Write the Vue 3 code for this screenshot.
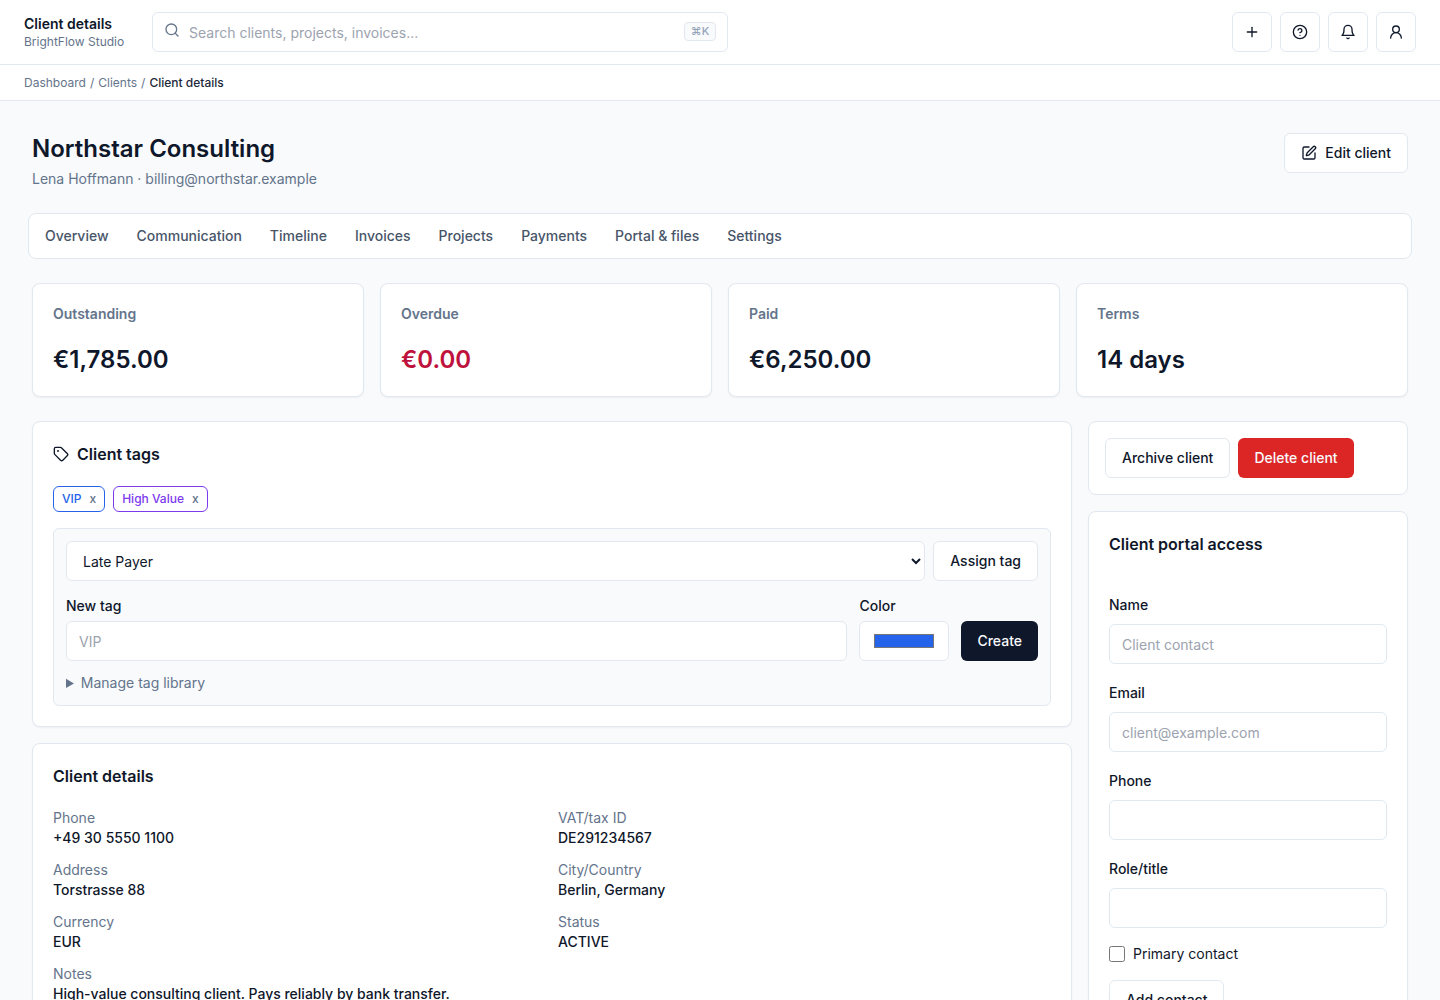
<script setup>
import { ref } from 'vue'

const tabs = ['Overview', 'Communication', 'Timeline', 'Invoices', 'Projects', 'Payments', 'Portal & files', 'Settings']

const stats = [
  { label: 'Outstanding', value: '€1,785.00' },
  { label: 'Overdue', value: '€0.00', danger: true },
  { label: 'Paid', value: '€6,250.00' },
  { label: 'Terms', value: '14 days' }
]

const tags = ref([
  { name: 'VIP', tone: 'blue' },
  { name: 'High Value', tone: 'violet' }
])

const details = [
  { label: 'Phone', value: '+49 30 5550 1100' },
  { label: 'VAT/tax ID', value: 'DE291234567' },
  { label: 'Address', value: 'Torstrasse 88' },
  { label: 'City/Country', value: 'Berlin, Germany' },
  { label: 'Currency', value: 'EUR' },
  { label: 'Status', value: 'ACTIVE' },
  { label: 'Notes', value: 'High-value consulting client. Pays reliably by bank transfer.', wide: true }
]

const contactFields = [
  { id: 'name', label: 'Name', placeholder: 'Client contact' },
  { id: 'email', label: 'Email', placeholder: 'client@example.com' },
  { id: 'phone', label: 'Phone', placeholder: '' },
  { id: 'role', label: 'Role/title', placeholder: '' }
]

const selectedTag = ref('Late Payer')
const newTag = ref('')
const tagColor = ref('#2563eb')

const removeTag = (name) => {
  tags.value = tags.value.filter((t) => t.name !== name)
}
</script>

<template>
  <div class="page">
    <header class="topbar">
      <div class="brand">
        <div class="brand-title">Client details</div>
        <div class="brand-sub">BrightFlow Studio</div>
      </div>
      <div class="search">
        <svg class="icon search-icon" viewBox="0 0 24 24"><circle cx="11" cy="11" r="8" /><path d="m21 21-4.3-4.3" /></svg>
        <input class="search-input" type="text" placeholder="Search clients, projects, invoices..." />
        <kbd class="kbd">⌘K</kbd>
      </div>
      <div class="top-actions">
        <button class="icon-btn" aria-label="Create">
          <svg class="icon" viewBox="0 0 24 24"><path d="M5 12h14" /><path d="M12 5v14" /></svg>
        </button>
        <button class="icon-btn" aria-label="Help">
          <svg class="icon" viewBox="0 0 24 24"><circle cx="12" cy="12" r="10" /><path d="M9.09 9a3 3 0 0 1 5.83 1c0 2-3 3-3 3" /><path d="M12 17h.01" /></svg>
        </button>
        <button class="icon-btn" aria-label="Notifications">
          <svg class="icon" viewBox="0 0 24 24"><path d="M6 8a6 6 0 0 1 12 0c0 7 3 9 3 9H3s3-2 3-9" /><path d="M10.3 21a1.94 1.94 0 0 0 3.4 0" /></svg>
        </button>
        <button class="icon-btn" aria-label="Account">
          <svg class="icon" viewBox="0 0 24 24"><circle cx="12" cy="8" r="5" /><path d="M20 21a8 8 0 0 0-16 0" /></svg>
        </button>
      </div>
    </header>

    <nav class="breadcrumb">
      <span>Dashboard</span>
      <span>/</span>
      <span>Clients</span>
      <span>/</span>
      <span class="crumb-current">Client details</span>
    </nav>

    <main class="main">
      <div class="page-head">
        <div>
          <h1 class="page-title">Northstar Consulting</h1>
          <p class="page-sub">Lena Hoffmann · billing@northstar.example</p>
        </div>
        <button class="btn">
          <svg class="icon" viewBox="0 0 24 24"><path d="M12 3H5a2 2 0 0 0-2 2v14a2 2 0 0 0 2 2h14a2 2 0 0 0 2-2v-7" /><path d="M18.375 2.625a1 1 0 0 1 3 3l-9.013 9.014a2 2 0 0 1-.853.505l-2.873.84a.5.5 0 0 1-.62-.62l.84-2.873a2 2 0 0 1 .506-.852z" /></svg>
          Edit client
        </button>
      </div>

      <nav class="tabs">
        <a v-for="tab in tabs" :key="tab" class="tab">{{ tab }}</a>
      </nav>

      <section class="stats">
        <div v-for="stat in stats" :key="stat.label" class="card stat">
          <div class="stat-label">{{ stat.label }}</div>
          <div class="stat-value" :class="{ danger: stat.danger }">{{ stat.value }}</div>
        </div>
      </section>

      <div class="columns">
        <div class="column">
          <section class="card">
            <h2 class="card-title">
              <svg class="icon" viewBox="0 0 24 24"><path d="M12.586 2.586A2 2 0 0 0 11.172 2H4a2 2 0 0 0-2 2v7.172a2 2 0 0 0 .586 1.414l8.704 8.704a2.426 2.426 0 0 0 3.42 0l6.58-6.58a2.426 2.426 0 0 0 0-3.42z" /><circle cx="7.5" cy="7.5" r=".5" fill="currentColor" /></svg>
              Client tags
            </h2>
            <div class="chips">
              <span v-for="tag in tags" :key="tag.name" class="chip" :class="tag.tone">
                {{ tag.name }}
                <button class="chip-x" @click="removeTag(tag.name)">x</button>
              </span>
            </div>
            <div class="tag-panel">
              <div class="assign-row">
                <select v-model="selectedTag" class="field select">
                  <option>Late Payer</option>
                </select>
                <button class="btn">Assign tag</button>
              </div>
              <div class="create-row">
                <div class="create-name">
                  <div class="label-line"><label for="new-tag">New tag</label></div>
                  <input id="new-tag" v-model="newTag" class="field" placeholder="VIP" />
                </div>
                <div class="create-color">
                  <div class="label-line"><label for="tag-color">Color</label></div>
                  <input id="tag-color" v-model="tagColor" type="color" class="field color" />
                </div>
                <button class="btn btn-dark">Create</button>
              </div>
              <details class="library">
                <summary>Manage tag library</summary>
              </details>
            </div>
          </section>

          <section class="card">
            <h2 class="card-title">Client details</h2>
            <dl class="details-grid">
              <div v-for="item in details" :key="item.label" :class="{ wide: item.wide }">
                <dt>{{ item.label }}</dt>
                <dd>{{ item.value }}</dd>
              </div>
            </dl>
          </section>
        </div>

        <aside class="column">
          <section class="card danger-card">
            <button class="btn">Archive client</button>
            <button class="btn btn-red">Delete client</button>
          </section>

          <section class="card">
            <h2 class="card-title">Client portal access</h2>
            <form class="contact-form" @submit.prevent>
              <div v-for="f in contactFields" :key="f.id" class="form-group">
                <div class="label-line"><label :for="f.id">{{ f.label }}</label></div>
                <input :id="f.id" class="field" :placeholder="f.placeholder" />
              </div>
              <label class="check">
                <input type="checkbox" />
                Primary contact
              </label>
              <button class="btn add-btn">Add contact</button>
            </form>
          </section>
        </aside>
      </div>
    </main>
  </div>
</template>

<style>
body {
  margin: 0;
  background: #f8fafc;
}
</style>

<style scoped>
.page {
  height: 1000px;
  overflow: hidden;
  background: #f8fafc;
  color: #0f172a;
  font-family: Inter, 'Liberation Sans', sans-serif;
  font-size: 16px;
  line-height: 24px;
}
.page *,
.page *::before,
.page *::after {
  box-sizing: border-box;
}
button,
input,
select {
  font-family: inherit;
  margin: 0;
}
.icon {
  width: 16px;
  height: 16px;
  flex-shrink: 0;
  fill: none;
  stroke: currentColor;
  stroke-width: 2;
  stroke-linecap: round;
  stroke-linejoin: round;
}

/* --- TOP BAR --- */
.topbar {
  display: flex;
  align-items: center;
  height: 65px;
  padding: 0 24px;
  background: white;
  border-bottom: 1px solid #e2e8f0;
}
.brand {
  width: 128px;
}
.brand-title {
  font-size: 14px;
  line-height: 20px;
  font-weight: 600;
}
.brand-sub {
  font-size: 12px;
  line-height: 16px;
  color: #64748b;
}
.search {
  display: flex;
  align-items: center;
  width: 576px;
  height: 40px;
  padding: 0 11px;
  border: 1px solid #e2e8f0;
  border-radius: 6px;
  background: white;
}
.search-icon {
  color: #64748b;
  margin-bottom: 4px;
}
.search-input {
  flex: 1;
  height: 38px;
  border: none;
  outline: none;
  padding: 0 9px;
  font-size: 14px;
  background: none;
}
.search-input::placeholder {
  color: #9ca3af;
}
.kbd {
  width: 32px;
  height: 19px;
  margin-bottom: 1px;
  border: 1px solid #e2e8f0;
  border-radius: 4px;
  background: #f8fafc;
  color: #94a3b8;
  font-family: inherit;
  font-size: 11px;
  font-weight: 500;
  line-height: 17px;
  text-align: center;
}
.top-actions {
  display: flex;
  gap: 8px;
  margin-left: auto;
}
.icon-btn {
  display: flex;
  align-items: center;
  justify-content: center;
  width: 40px;
  height: 40px;
  padding: 0;
  border: 1px solid #e2e8f0;
  border-radius: 6px;
  background: white;
  color: #0f172a;
}
.breadcrumb {
  display: flex;
  gap: 4px;
  height: 36px;
  padding: 10px 24px;
  background: white;
  border-bottom: 1px solid #e2e8f0;
  font-size: 12px;
  line-height: 16px;
  color: #64748b;
}
.crumb-current {
  color: #1e293b;
  font-weight: 500;
}

/* --- PAGE HEAD --- */
.main {
  padding: 32px;
}
.page-head {
  display: flex;
  justify-content: space-between;
  align-items: flex-start;
}
.page-title {
  margin: 0;
  font-size: 24px;
  line-height: 32px;
  font-weight: 600;
}
.page-sub {
  margin: 4px 0 0;
  font-size: 14px;
  line-height: 20px;
  color: #64748b;
}
.btn {
  display: inline-flex;
  align-items: center;
  justify-content: center;
  gap: 8px;
  flex-shrink: 0;
  height: 40px;
  padding: 0 16px;
  border: 1px solid #e2e8f0;
  border-radius: 6px;
  background: white;
  color: #0f172a;
  font-size: 14px;
  line-height: 20px;
  font-weight: 500;
  white-space: nowrap;
}
.btn-dark {
  border: none;
  background: #0f172a;
  color: #f8fafc;
}
.btn-red {
  border: none;
  background: #dc2626;
  color: #f8fafc;
}
.tabs {
  display: flex;
  gap: 28px;
  margin: 24px -4px 0;
  padding: 12px 16px;
  border: 1px solid #e2e8f0;
  border-radius: 8px;
  background: white;
}
.tab {
  font-size: 14px;
  line-height: 20px;
  font-weight: 500;
  color: #475569;
}

/* --- CARDS --- */
.card {
  padding: 20px;
  border: 1px solid #e2e8f0;
  border-radius: 8px;
  background: white;
  box-shadow: 0 1px 2px rgba(0, 0, 0, 0.05);
}
.stats {
  display: grid;
  grid-template-columns: repeat(4, 1fr);
  gap: 16px;
  margin-top: 24px;
}
.stat-label {
  font-size: 14px;
  line-height: 20px;
  font-weight: 600;
  color: #64748b;
}
.stat-value {
  margin-top: 20px;
  font-size: 24px;
  line-height: 32px;
  font-weight: 600;
}
.stat-value.danger {
  color: #be123c;
}
.columns {
  display: grid;
  grid-template-columns: 1fr 320px;
  gap: 16px;
  margin-top: 24px;
}
.column {
  display: flex;
  flex-direction: column;
  gap: 16px;
}
.card-title {
  display: flex;
  align-items: center;
  gap: 8px;
  margin: 0;
  font-size: 16px;
  line-height: 24px;
  font-weight: 600;
}

/* --- TAGS --- */
.chips {
  display: flex;
  gap: 8px;
  margin-top: 20px;
}
.chip {
  display: inline-flex;
  align-items: center;
  gap: 8px;
  height: 26px;
  padding: 0 8px;
  border: 1px solid currentColor;
  border-radius: 6px;
  font-size: 12px;
  line-height: 16px;
  font-weight: 500;
}
.chip.blue {
  color: #2563eb;
}
.chip.violet {
  color: #7c3aed;
}
.chip-x {
  padding: 0;
  border: none;
  background: none;
  color: #64748b;
  font-size: 12px;
  line-height: 16px;
  font-weight: 500;
}
.tag-panel {
  display: flex;
  flex-direction: column;
  gap: 12px;
  margin-top: 16px;
  padding: 12px;
  border: 1px solid #e2e8f0;
  border-radius: 6px;
  background: #f8fafc;
}
.assign-row {
  display: flex;
  gap: 8px;
}
.create-row {
  display: flex;
  align-items: flex-end;
  gap: 12px;
}
.create-name {
  flex: 1;
}
.create-name .label-line,
.create-color .label-line {
  margin-bottom: 4px;
}
.create-color {
  width: 90px;
}
.label-line {
  height: 24px;
  margin-bottom: 8px;
}
.label-line label {
  font-size: 14px;
  font-weight: 500;
}
.field {
  display: block;
  width: 100%;
  height: 40px;
  padding: 8px 12px;
  border: 1px solid #e2e8f0;
  border-radius: 6px;
  background: white;
  color: #0f172a;
  font-size: 14px;
  line-height: 20px;
}
.field::placeholder {
  color: #9ca3af;
}
.select {
  flex: 1;
}
.library summary {
  font-size: 14px;
  line-height: 20px;
  color: #64748b;
}

/* --- DETAILS --- */
.details-grid {
  display: grid;
  grid-template-columns: 1fr 1fr;
  gap: 12px;
  margin: 20px 0 0;
  font-size: 14px;
  line-height: 20px;
}
.details-grid dt {
  color: #64748b;
}
.details-grid dd {
  margin: 0;
  font-weight: 500;
}
.wide {
  grid-column: span 2;
}

/* --- SIDEBAR --- */
.danger-card {
  display: flex;
  gap: 8px;
  padding: 16px;
  box-shadow: none;
}
.contact-form {
  display: flex;
  flex-direction: column;
  gap: 16px;
  margin-top: 36px;
}
.check {
  display: flex;
  align-items: center;
  gap: 8px;
  font-size: 14px;
  line-height: 20px;
}
.check input {
  width: 16px;
  height: 16px;
}
.add-btn {
  align-self: flex-start;
}
</style>
